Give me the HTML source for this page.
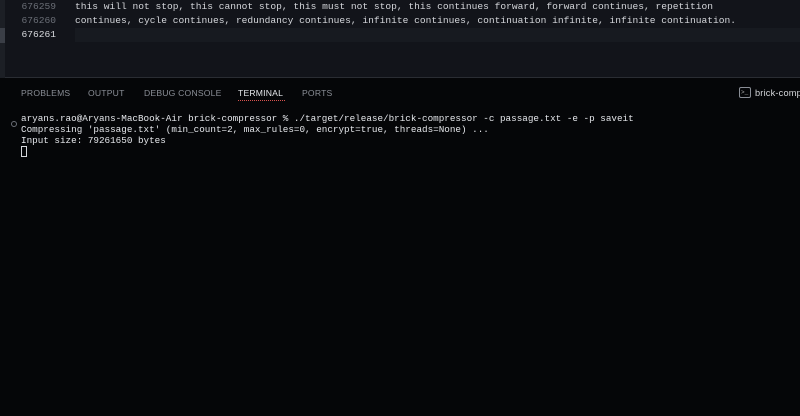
<!DOCTYPE html>
<html><head><style>
*{margin:0;padding:0;box-sizing:border-box}
body{width:800px;height:416px;overflow:hidden;background:#050608;font-family:"Liberation Mono",monospace;position:relative}
#ed{position:absolute;left:0;top:0;width:800px;height:78px;background:#12141a;border-bottom:1px solid #2a2d33}
#strip{position:absolute;left:0;top:0;width:5px;height:78px;background:#1c1f25}
#strip i{position:absolute;left:0;top:28px;width:5px;height:15px;background:#3a3e46}
.ln{position:absolute;left:0;width:56px;text-align:right;font-size:9.6px;color:#6b6f77}
.tx{position:absolute;left:75px;font-size:9.59px;color:#d4d6da;white-space:pre}
#cur{position:absolute;left:75px;top:28px;width:725px;height:14px;background:#171a20}
.tab{position:absolute;top:88px;font-family:"Liberation Sans",sans-serif;font-size:8.6px;color:#8a8e96;letter-spacing:.2px;white-space:nowrap}
.t{position:absolute;left:21px;font-size:9.29px;color:#e4e6ea;white-space:pre}
</style></head><body>
<div id="ed"><div id="strip"><i></i></div><div id="cur"></div>
<div class="ln" style="top:1px">676259</div>
<div class="ln" style="top:15px">676260</div>
<div class="ln" style="top:29px;color:#d8dade">676261</div>
<div class="tx" style="top:1px">this will not stop, this cannot stop, this must not stop, this continues forward, forward continues, repetition</div>
<div class="tx" style="top:15px">continues, cycle continues, redundancy continues, infinite continues, continuation infinite, infinite continuation.</div>
</div>
<div class="tab" style="left:21px">PROBLEMS</div>
<div class="tab" style="left:88px">OUTPUT</div>
<div class="tab" style="left:144px">DEBUG CONSOLE</div>
<div class="tab" style="left:238px;color:#e6e8ec">TERMINAL</div>
<div style="position:absolute;left:238px;top:100px;width:47px;border-top:1px dotted #d9534f"></div>
<div class="tab" style="left:302px">PORTS</div>
<div style="position:absolute;left:739px;top:87px;width:12px;height:11px;border:1px solid #8a8e96;border-radius:2px;font-size:6px;color:#aaa;line-height:9px;padding-left:1px">&gt;_</div>
<div class="tab" style="left:755px;color:#d4d6da;font-size:9.2px">brick-comp</div>
<div style="position:absolute;left:11px;top:121px;width:6px;height:6px;border:1px solid #6b6f77;border-radius:50%"></div>
<div class="t" style="top:113px">aryans.rao@Aryans-MacBook-Air brick-compressor % ./target/release/brick-compressor -c passage.txt -e -p saveit</div>
<div class="t" style="top:124px">Compressing 'passage.txt' (min_count=2, max_rules=0, encrypt=true, threads=None) ...</div>
<div class="t" style="top:135px">Input size: 79261650 bytes</div>
<div style="position:absolute;left:21px;top:146px;width:6px;height:11px;border:1px solid #d4d6da"></div>
</body></html>
